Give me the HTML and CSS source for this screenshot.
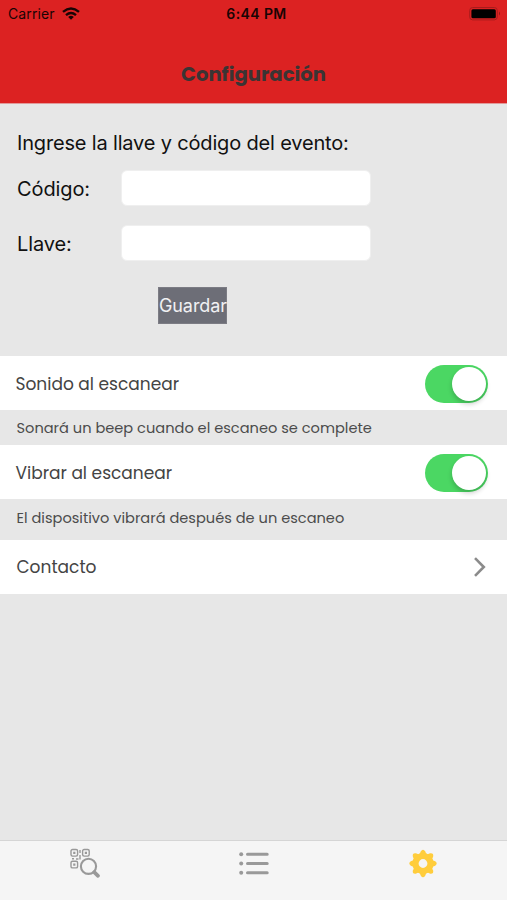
FILE: index.html
```html
<!DOCTYPE html>
<html lang="es">
<head>
<meta charset="utf-8">
<title>Configuración</title>
<link rel="stylesheet" href="styles.css">
</head>
<body>
<div class="screen">
  <header class="top">
    <div class="status">
      <div class="carrier">Carrier
        <svg width="18" height="14" viewBox="0 0 18 14" fill="none" stroke="#190404" stroke-width="2.4"><path d="M1 4.8Q9-2 17 4.8M4 8.1Q9 3.8 14 8.1"/><path d="M6.2 10Q9 7.7 11.8 10L9 12.8z" fill="#190404" stroke="none"/></svg>
      </div>
      <div class="time">6:44 PM</div>
      <svg class="battery" width="32" height="14" viewBox="0 0 32 14"><rect x=".7" y=".5" width="27.6" height="12.4" rx="3" fill="none" stroke="#a81c1c"/><rect x="2.4" y="2.2" width="24.4" height="9" rx="1.5" fill="#000"/><path d="M30 4.6q2 2 0 4z" fill="#8f1818"/></svg>
    </div>
    <h1 class="title">Configuración</h1>
  </header>
  <main>
    <form class="event">
      <p class="intro">Ingrese la llave y código del evento:</p>
      <div class="field"><label for="code">Código:</label><input id="code" type="text"></div>
      <div class="field"><label for="key">Llave:</label><input id="key" type="text"></div>
      <button class="save" type="button">Guardar</button>
    </form>
    <div class="row">Sonido al escanear<span class="switch"></span></div>
    <p class="note">Sonará un beep cuando el escaneo se complete</p>
    <div class="row">Vibrar al escanear<span class="switch"></span></div>
    <p class="note tall">El dispositivo vibrará después de un escaneo</p>
    <div class="row contact">Contacto
      <svg class="chevron" width="14" height="20" viewBox="0 0 14 20" fill="none" stroke="#8b8b8b" stroke-width="2.6"><path d="M2 1.2L10.8 10 2 18.8"/></svg>
    </div>
  </main>
  <nav class="tabs">
    <a class="tab"><svg width="32" height="32" viewBox="0 0 32 32" fill="none" stroke="#999">
      <g stroke-width="1.4"><rect x="2" y="1.5" width="6.6" height="6.6" rx="1.5"/><rect x="13.6" y="1.5" width="6.6" height="6.6" rx="1.5"/><rect x="2" y="13.3" width="6.6" height="6.6" rx="1.5"/><path d="M4.2 4.8h2.2M15.8 4.8H18M4.2 16.6h2.2" stroke-width="2.2"/><path d="M11 2v3M11 7v4.5M3 10.8h2M7 11h2.5"/></g>
      <circle cx="19.5" cy="18.3" r="7.6" stroke-width="2.1"/><path d="M25.2 24.2L29 27.8" stroke-width="3.8" stroke-linecap="round"/></svg></a>
    <a class="tab"><svg width="32" height="32" viewBox="0 0 32 32" fill="#999" stroke="#999" stroke-width="3" stroke-linecap="round"><path d="M9.5 6.3h19.7M9.5 15.5h19.7M9.5 24.8h19.7"/><g stroke="none"><circle cx="3.2" cy="6.3" r="2"/><circle cx="3.2" cy="15.5" r="2"/><circle cx="3.2" cy="24.8" r="2"/></g></svg></a>
    <a class="tab"><svg width="32" height="32" viewBox="-16 -15.5 32 32" fill="#ffcd3c"><defs><path id="tooth" d="M-4.6-9Q-2.6-10-2.2-12.2Q0-15.2 2.2-12.2Q2.6-10 4.6-9z"/></defs><use href="#tooth"/><use href="#tooth" transform="rotate(45)"/><use href="#tooth" transform="rotate(90)"/><use href="#tooth" transform="rotate(135)"/><use href="#tooth" transform="rotate(180)"/><use href="#tooth" transform="rotate(225)"/><use href="#tooth" transform="rotate(270)"/><use href="#tooth" transform="rotate(315)"/><circle r="7.4" fill="none" stroke="#ffcd3c" stroke-width="6"/></svg></a>
  </nav>
</div>
</body>
</html>
```
FILE: styles.css
```css
* { box-sizing: border-box; }
body { margin: 0; font-family: Inter, "Liberation Sans", sans-serif; }
.screen { width: 507px; height: 900px; display: flex; flex-direction: column; background: #e7e7e7; overflow: hidden; }
h1, p { margin: 0; font-weight: 400; }
.top { height: 104px; flex: none; background: #dc2222; border-bottom: 1px solid #e19a9a; }
.status { height: 27px; display: grid; grid-template-columns: 1fr auto 1fr; align-items: center; padding: 0 6px 0 8px; font-size: 14px; letter-spacing: .1px; color: #190404; }
.carrier { display: flex; align-items: center; gap: 7px; }
.time { font-weight: 600; letter-spacing: .4px; padding-left: 4px; }
.battery { justify-self: end; }
.title { text-align: center; font: 700 19.6px/94px Poppins, Inter, sans-serif; color: #3b3434; }
main { flex: 1; }
.event { height: 252px; padding: 23px 17px 0; font-size: 20px; color: #111; }
.intro { height: 42px; line-height: 32px; letter-spacing: -.17px; }
.field { height: 37px; margin-bottom: 18px; display: flex; align-items: center; }
.field label { width: 104px; padding-top: 3px; letter-spacing: -.1px; }
.field input { width: 250px; height: 36px; border: 1px solid #efefef; border-radius: 6px; background: #fff; }
.save { display: block; width: 69px; height: 37px; margin: 26px 0 0 141px; padding: 0; border: 1px solid #7c7c84; background: #6d6e77; color: #f1f1f3; font: 400 18px/35px Inter, sans-serif; letter-spacing: -.1px; }
.row { height: 54px; display: flex; align-items: center; justify-content: space-between; padding: 1px 19px 0 15.5px; background: #fff; font: 400 17px Poppins, Inter, sans-serif; color: #444; }
.contact { padding: 0 20px 0 16.5px; }
.note { height: 35px; line-height: 37px; padding-left: 16.5px; font-family: Poppins, Inter, sans-serif; font-size: 14.6px; color: #4c4c4c; }
.tall { height: 41px; line-height: 39px; }
.switch { width: 63px; height: 38px; margin-top: 1px; border-radius: 19px; background: #4bd763; padding: 2px; display: flex; justify-content: flex-end; }
.switch::after { content: ""; width: 34px; height: 34px; border-radius: 50%; background: #fff; box-shadow: 0 3px 5px rgba(0,0,0,.2); }
.tabs { height: 60px; flex: none; display: grid; grid-template-columns: repeat(3, 1fr); background: #f5f5f5; border-top: 1px solid #d5d5d5; }
.tab { display: flex; justify-content: center; padding-top: 7px; }
```
